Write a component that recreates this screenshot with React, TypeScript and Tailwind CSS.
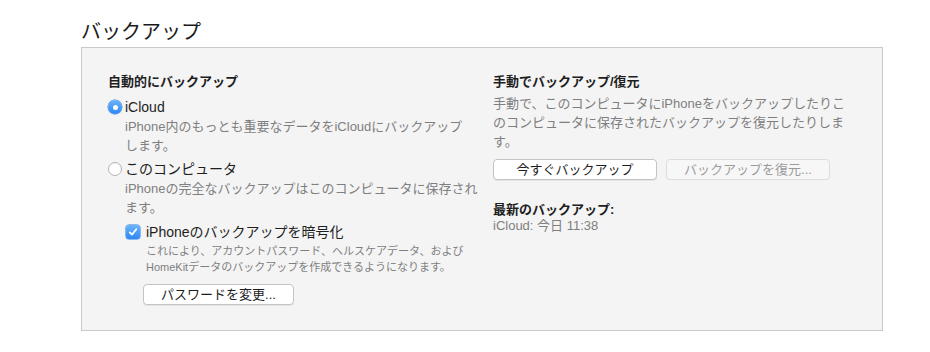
import React from 'react'

const FONT = { fontFamily: '"Liberation Sans", "Noto Sans CJK JP", sans-serif' }

function Radio({ checked }: { checked: boolean }) {
  if (checked) {
    return (
      <span className="flex h-[14px] w-[14px] shrink-0 items-center justify-center rounded-full bg-gradient-to-b from-[#6cb3fa] to-[#2a87f5] shadow-[0_0_0_0.5px_#2b7de0]">
        <span className="h-[5px] w-[5px] rounded-full bg-white" />
      </span>
    )
  }
  return (
    <span className="h-[14px] w-[14px] shrink-0 rounded-full border border-[#b4b4b4] bg-white shadow-[inset_0_1px_1px_rgba(0,0,0,0.05)]" />
  )
}

function Checkbox() {
  return (
    <span className="flex h-[14px] w-[14px] shrink-0 items-center justify-center rounded-[3px] bg-gradient-to-b from-[#6cb3fa] to-[#2a87f5] shadow-[0_0_0_0.5px_#2b7de0]">
      <svg width="10" height="10" viewBox="0 0 10 10" fill="none">
        <path d="M1.8 5.3 L4 7.6 L8.3 2.2" stroke="white" strokeWidth="1.7" strokeLinecap="round" strokeLinejoin="round" />
      </svg>
    </span>
  )
}

function Button({ children, width, disabled }: { children: React.ReactNode; width: string; disabled?: boolean }) {
  return (
    <button
      disabled={disabled}
      className={
        disabled
          ? `${width} h-[21px] rounded-[4px] border border-[#dcdcdc] bg-[#f7f7f7] text-[13px] leading-[19px] text-[#9b9b9b]`
          : `${width} h-[21px] rounded-[4px] border border-[#c4c4c4] bg-white text-[13px] leading-[19px] text-[#1e1e1e] shadow-[0_1px_0_rgba(0,0,0,0.06)]`
      }
    >
      {children}
    </button>
  )
}

export default function App() {
  return (
    <div className="min-h-[352px] bg-white pl-[81px] pt-[18px]" style={FONT}>
      <h1 className="text-[20px] leading-[28px] text-[#1a1a1a]">バックアップ</h1>

      <div className="mt-[1px] flex h-[284px] w-[802px] border border-[#c9c9c9] bg-[#f4f4f4] pl-[26px] pt-[24px]">
        {/* 自動的にバックアップ */}
        <div className="w-[385px] shrink-0">
          <h3 className="text-[13px] font-bold leading-[19px] text-[#1e1e1e]">自動的にバックアップ</h3>

          <div className="mt-[6px] flex items-center gap-[3px]">
            <Radio checked />
            <span className="text-[14px] leading-[20px] text-[#1e1e1e]">iCloud</span>
          </div>
          <p className="w-[360px] pl-[17px] text-[13px] leading-[19px] text-[#7f7f7f]">
            iPhone内のもっとも重要なデータをiCloudにバックアップします。
          </p>

          <div className="mt-[4px] flex items-center gap-[3px]">
            <Radio checked={false} />
            <span className="text-[14px] leading-[20px] text-[#1e1e1e]">このコンピュータ</span>
          </div>
          <p className="w-[375px] pl-[17px] text-[13px] leading-[19px] text-[#7f7f7f]">
            iPhoneの完全なバックアップはこのコンピュータに保存されます。
          </p>

          <div className="mt-[5px] pl-[18px]">
            <div className="flex items-center gap-[6px]">
              <Checkbox />
              <span className="text-[14px] leading-[20px] text-[#1e1e1e]">iPhoneのバックアップを暗号化</span>
            </div>
            <p className="mt-[1px] pl-[20px] text-[11px] leading-[16px] text-[#7f7f7f]">
              これにより、アカウントパスワード、ヘルスケアデータ、および
              <br />
              HomeKitデータのバックアップを作成できるようになります。
            </p>
            <div className="mt-[7px] pl-[17px]">
              <Button width="w-[151px]">パスワードを変更...</Button>
            </div>
          </div>
        </div>

        {/* 手動でバックアップ/復元 */}
        <div className="w-[360px]">
          <h3 className="text-[13px] font-bold leading-[19px] text-[#1e1e1e]">手動でバックアップ/復元</h3>
          <p className="mt-[3px] text-[13px] leading-[19px] text-[#7f7f7f]">
            手動で、このコンピュータにiPhoneをバックアップしたりこのコンピュータに保存されたバックアップを復元したりします。
          </p>
          <div className="mt-[8px] flex gap-[9px]">
            <Button width="w-[164px]">今すぐバックアップ</Button>
            <Button width="w-[164px]" disabled>
              バックアップを復元...
            </Button>
          </div>
          <h3 className="mt-[22px] text-[13px] font-bold leading-[16px] text-[#1e1e1e]">最新のバックアップ:</h3>
          <p className="text-[13px] leading-[16px] text-[#7f7f7f]">iCloud: 今日 11:38</p>
        </div>
      </div>
    </div>
  )
}
